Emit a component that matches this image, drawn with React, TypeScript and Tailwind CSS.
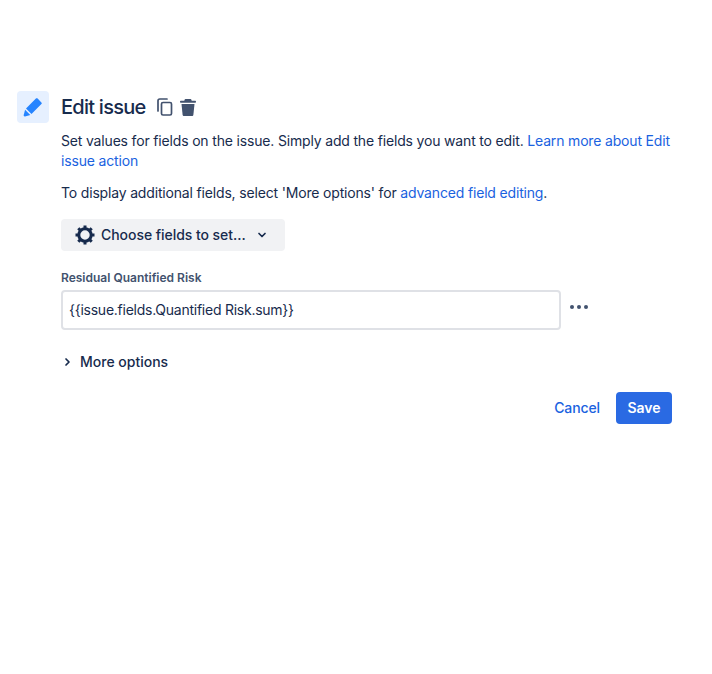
const fontStack = { fontFamily: 'Inter, "Noto Sans", sans-serif' };

function Pencil() {
  return (
    <svg width="24" height="24" viewBox="0 0 24 24" fill="#2684ff">
      <path d="M16.6 3.6l3.8 3.8c.5.5.5 1.2 0 1.700l-9.900 9.900-5.500-5.500 9.900-9.900c.5-.5 1.200-.5 1.700 0z" />
      <path d="M4.100 14.700l5.200 5.200-5.300 1.500c-.8.200-1.500-.5-1.300-1.300z" />
    </svg>
  );
}

function Copy() {
  return (
    <svg width="18" height="18" viewBox="0 0 18 18" fill="none" stroke="#42526e" strokeWidth="1.700">
      <path d="M2 13V2.800C2 1.800 2.800 1 3.800 1H11" strokeLinecap="round" />
      <rect x="5.500" y="4.500" width="10" height="12.500" rx="1.500" />
    </svg>
  );
}

function Trash() {
  return (
    <svg width="16" height="17" viewBox="0 0 16 17" fill="#42526e">
      <path d="M5.500 0h5c.4 0 .8.300.9.700l.3 1.100h3.300c.6 0 1 .4 1 1s-.4 1-1 1H1c-.6 0-1-.4-1-1s.4-1 1-1h3.300L4.600.7C4.700.3 5.100 0 5.500 0z" />
      <path d="M1.500 5h13l-1.100 10.700c-.1.700-.7 1.300-1.400 1.300H4c-.7 0-1.300-.6-1.400-1.300z" />
    </svg>
  );
}

function Gear() {
  return (
    <svg width="20" height="20" viewBox="0 0 20 20" fill="none" stroke="#172b4d">
      <circle cx="10" cy="10" r="6.200" strokeWidth="3" />
      <g strokeWidth="3">
        <path d="M10 .5v3M10 16.500v3M.5 10h3M16.500 10h3M3.300 3.300l2.100 2.100M14.600 14.600l2.100 2.100M3.300 16.700l2.100-2.100M14.600 5.400l2.100-2.100" />
      </g>
    </svg>
  );
}

function ChevronDown() {
  return (
    <svg width="10" height="8" viewBox="0 0 10 8" fill="none" stroke="#172b4d" strokeWidth="1.700" strokeLinecap="round" strokeLinejoin="round">
      <path d="M2 2.500l3 3 3-3" />
    </svg>
  );
}

function ChevronRight() {
  return (
    <svg width="8" height="10" viewBox="0 0 8 10" fill="none" stroke="#172b4d" strokeWidth="1.700" strokeLinecap="round" strokeLinejoin="round">
      <path d="M3 2l3 3-3 3" />
    </svg>
  );
}

export default function App() {
  return (
    <div className="min-h-[674px] bg-white pt-[91px] pl-[17px] pr-10 text-[#172b4d]" style={fontStack}>
      <div className="flex gap-3">
        <div className="w-8 h-8 shrink-0 rounded bg-[#e6f0ff] flex items-center justify-center">
          <Pencil />
        </div>
        <div className="flex-1">
          <div className="flex items-center h-8">
            <h1 className="text-xl tracking-[-0.75px] font-medium leading-8">Edit issue</h1>
            <span className="ml-[11px] flex items-center"><Copy /></span>
            <span className="ml-[6px] flex items-center"><Trash /></span>
          </div>
          <p className="mt-2 text-sm leading-5 tracking-[-0.17px]">
            Set values for fields on the issue. Simply add the fields you want to edit.{' '}
            <a className="text-[#1a62e0]">Learn more about Edit issue action</a>
          </p>
          <p className="mt-3 text-sm leading-5 tracking-[-0.17px]">
            To display additional fields, select 'More options' for{' '}
            <a className="text-[#1a62e0]">advanced field editing</a>.
          </p>
          <button className="mt-4 w-[224px] h-8 rounded bg-[#f1f2f4] flex items-center pl-[14px] text-sm font-medium tracking-[-0.05px]">
            <Gear />
            <span className="ml-[6px]">Choose fields to set...</span>
            <span className="ml-[11px]"><ChevronDown /></span>
          </button>
          <label className="block mt-[19px] text-xs font-semibold leading-4 text-[#42526e]">Residual Quantified Risk</label>
          <div className="mt-1 flex items-center">
            <div className="w-[500px] h-10 rounded border-2 border-[#dfe1e6] flex items-center pl-[6px] text-sm tracking-[-0.25px]">
              {'{{issue.fields.Quantified Risk.sum}}'}
            </div>
            <div className="ml-[9px] mb-[6px] flex gap-[3px]">
              <span className="w-1 h-1 rounded-full bg-[#42526e]" />
              <span className="w-1 h-1 rounded-full bg-[#42526e]" />
              <span className="w-1 h-1 rounded-full bg-[#42526e]" />
            </div>
          </div>
          <div className="mt-[22px] flex items-center text-sm font-medium leading-5">
            <span className="ml-[2px]"><ChevronRight /></span>
            <span className="ml-[9px]">More options</span>
          </div>
          <div className="mt-5 flex justify-end items-center">
            <a className="text-sm font-medium text-[#1a62e0] tracking-[-0.1px]">Cancel</a>
            <button className="ml-4 w-14 h-8 rounded bg-[#2a6ae3] text-white text-sm font-semibold">Save</button>
          </div>
        </div>
      </div>
    </div>
  );
}
